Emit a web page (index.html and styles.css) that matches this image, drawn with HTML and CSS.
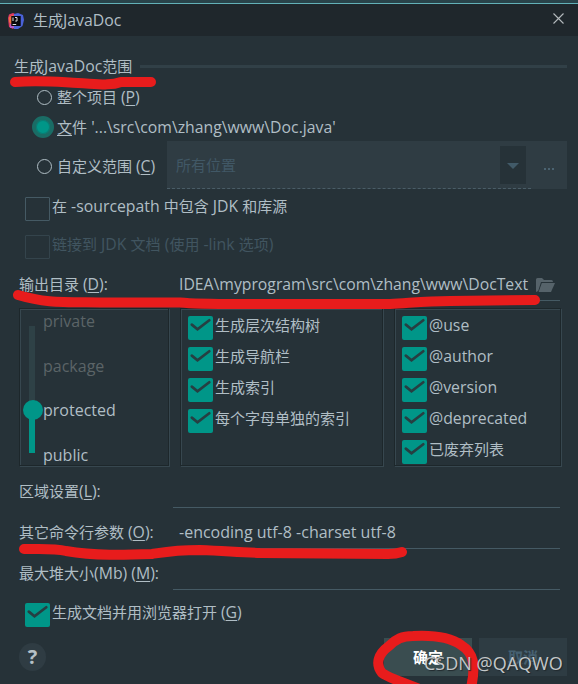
FILE: index.html
```html
<!DOCTYPE html>
<html lang="zh-CN">
<head>
<meta charset="utf-8">
<title>生成JavaDoc</title>
<link rel="stylesheet" href="styles.css">
</head>
<body>
<svg class="defs" width="0" height="0" aria-hidden="true">
  <symbol id="tick" viewBox="0 0 25 24"><path d="M3.800 8.600 9.500 13.200 21.300 4.200" fill="none" stroke="#263f42" stroke-width="2.700" stroke-linecap="round"/></symbol>
</svg>
<main class="dialog">
  <header class="titlebar">
    <svg class="logo" viewBox="0 0 16 16">
      <path d="M1 1.500 5 0l4 2-2 12-2 2-4-2-.5-4L0 5z" fill="#dc3a64"/>
      <path d="M6 1 10 0l5 2 1 5-1.500 6L10 16H6l-1-3z" fill="#4a62d8"/>
      <path d="M1 4 5 2l2 3-4 6-2-2z" fill="#f0703e"/>
      <path d="M2 11l4 1v3l-4 0z" fill="#b55ac5"/>
      <rect x="3.300" y="3" width="9.400" height="10" fill="#08080c"/>
      <path d="M5 4.500v3.500M7 4.500h2v3.500H7.300M4.600 11.500h3.600" fill="none" stroke="#ddd" stroke-width="1"/>
    </svg>
    <h1>生成<em>JavaDoc</em></h1>
    <svg class="close" viewBox="0 0 11 11"><path d="M.5.500l10 10M10.500.500l-10 10" stroke="#b4babd" stroke-width="1.100"/></svg>
  </header>
  <section class="content">
    <div class="row legend"><span>生成<em>JavaDoc</em>范围</span><i></i></div>
    <div class="row radio r1"><i class="dot"></i><span>整个项目 <em>(<u>P</u>)</em></span></div>
    <div class="row radio r2"><i class="dot on"></i><span><u>文</u>件<em> '...\src\com\zhang\www\Doc.java'</em></span></div>
    <div class="row custom">
      <div class="radio"><i class="dot"></i><span>自定义范围 <em>(<u>C</u>)</em></span></div>
      <div class="combo"><span>所有位置</span><b class="arrow"></b></div>
      <div class="more"><i></i><i></i><i></i></div>
    </div>
    <div class="row check c1"><i class="box"></i><span>在<em> -sourcepath </em>中包含<em> JDK </em>和库源</span></div>
    <div class="row check c2 disabled"><i class="box"></i><span>链接到<em> JDK </em>文档<em> (</em>使用<em> -link </em>选项<em>)</em></span></div>
    <div class="row field output"><label>输出目录 <em>(<u>D</u>):</em></label><div class="input"><span><em>IDEA\myprogram\src\com\zhang\www\DocText</em></span>
      <svg class="folder" viewBox="0 0 19 14"><path d="M0 14V1.500Q0 0 1.500 0H6l2 2h7.500Q17 2 17 4H5L2.200 13z" fill="#56636a"/><path d="M5.800 5H19l-4 9H2.600z" fill="#56636a"/></svg></div></div>
    <div class="panels">
      <div class="panel levels">
        <div class="slider"><i></i></div>
        <ul><li class="off">private</li><li class="off">package</li><li>protected</li><li>public</li></ul>
      </div>
      <div class="panel">
        <div class="check"><svg class="box"><use href="#tick"/></svg><span>生成层次结构树</span></div>
        <div class="check"><svg class="box"><use href="#tick"/></svg><span>生成导航栏</span></div>
        <div class="check"><svg class="box"><use href="#tick"/></svg><span>生成索引</span></div>
        <div class="check"><svg class="box"><use href="#tick"/></svg><span>每个字母单独的索引</span></div>
      </div>
      <div class="panel tags">
        <div class="check"><svg class="box"><use href="#tick"/></svg><span><em>@use</em></span></div>
        <div class="check"><svg class="box"><use href="#tick"/></svg><span><em>@author</em></span></div>
        <div class="check"><svg class="box"><use href="#tick"/></svg><span><em>@version</em></span></div>
        <div class="check"><svg class="box"><use href="#tick"/></svg><span><em>@deprecated</em></span></div>
        <div class="check"><svg class="box"><use href="#tick"/></svg><span>已废弃列表</span></div>
      </div>
    </div>
    <div class="row field f1"><label>区域设置<em>(<u>L</u>):</em></label><div class="input"></div></div>
    <div class="row field"><label>其它命令行参数 <em>(<u>O</u>):</em></label><div class="input"><span class="args">-encoding utf-8 -charset utf-8</span></div></div>
    <div class="row field"><label>最大堆大小<em>(Mb) (<u>M</u>):</em></label><div class="input"></div></div>
    <div class="row check open"><svg class="box"><use href="#tick"/></svg><span>生成文档并用浏览器打开 <em>(<u>G</u>)</em></span></div>
    <footer>
      <div class="help">?</div>
      <button class="ok">确定</button>
      <button class="cancel">取消</button>
    </footer>
  </section>
  <svg class="marks" viewBox="0 0 578 684" fill="none" stroke="#e81c1c" stroke-width="10" stroke-linecap="round" stroke-linejoin="round">
    <path d="M15 82C40 80 58 82 78 83S110 86 121 82L151 82"/>
    <path d="M18 295C45 303 60 302 100 302.500L180 302.500C195 304 210 304 240 304L390 304C410 303 425 301 450 301L535 300"/>
    <path d="M24 549C40 549 54 548 66 551C95 556 125 555 152 554C165 552 175 550 200 550C225 551 235 552 260 553L388 554C396 554 399 553 402 552"/>
    <path d="M422 690C402 682 389 678 382 673C375 664 378 654 389 646C396 639 402 636 413 636C432 635 450 637 461 645C474 653 476 665 471 688"/>
  </svg>
  <div class="watermark">CSDN @QAQWO</div>
</main>
</body>
</html>
```
FILE: styles.css
```css
* { box-sizing: border-box; }
body {
  margin: 0;
  background: #263238;
  color: #b0bec5;
  font: 15px/20px "Open Sans", "Noto Sans CJK SC", sans-serif;
}
.defs { position: absolute; }
.dialog { position: relative; width: 578px; height: 684px; overflow: hidden; }
u { text-underline-offset: 2px; text-decoration-thickness: 1px; }
em { font-style: normal; font-size: 15.8px; line-height: 18px; }
span, label { white-space: nowrap; }

.titlebar {
  display: flex;
  align-items: center;
  height: 36px;
  padding: 4px 14px 0 8px;
  background: linear-gradient(#29434a 3px, #62b1b8 3px 4px, #1f272c 4px);
}
.logo { width: 16px; height: 16px; margin-top: 1px; }
h1 { flex: 1; margin: 0 0 0 9px; font-size: 15px; font-weight: 400; }
.close { width: 11px; height: 11px; margin-top: -4px; }

.content { display: flex; flex-direction: column; padding-top: 20px; }
.row { display: flex; flex: none; align-items: center; }
.legend { height: 20px; margin: 0 11px 0 14px; }
.legend span { padding-bottom: 1px; }
.legend i { flex: 1; height: 3px; margin: 1px 0 0 8px; background: #314047; }

.radio { display: flex; align-items: center; }
.radio > span { padding-bottom: 1px; }
.r1 { height: 22px; margin-top: 10px; padding-left: 37px; }
.r2 { height: 22px; margin-top: 8px; padding-left: 32px; }
.dot { width: 15px; height: 15px; margin: 1px 5px 0 0; border: 1px solid #b0bec5; border-radius: 50%; }
.dot.on { width: 22px; height: 22px; margin: 0 3px 0 0; border: 4px solid #1a6c65; background: #009688; box-shadow: inset 0 0 0 1px #087f75; }

.custom { height: 48px; margin: 3px 11px 0 37px; }
.custom .radio { width: 130px; height: 50px; padding-top: 2px; }
.combo {
  display: flex;
  align-items: center;
  justify-content: space-between;
  width: 364px;
  height: 48px;
  padding: 0 5px 0 9px;
  border-bottom: 1px dashed #4a5d67;
  background: #2f3c43;
  color: #415866;
}
.arrow { display: flex; align-items: center; justify-content: center; width: 26px; height: 38px; background: #263238; }
.arrow::after { content: ""; border: 6px solid transparent; border-top-color: #415a68; border-bottom: 0; margin-top: 2px; }
.more { display: flex; flex: 1; gap: 2px; align-items: center; height: 48px; padding: 8px 0 0 13px; background: #2f3c43; }
.more i { width: 2px; height: 2px; background: #4b6371; }

.check { display: flex; align-items: flex-start; height: 31px; }
.check span { margin: -1px 0 0 2px; }
.row.check { align-items: flex-start; }
.box { flex: none; width: 25px; height: 24px; border: 1px solid #455a64; border-radius: 1px; }
svg.box { border: 0; background: #009688; border-radius: 2px; }
.c1 { height: 24px; margin-top: 8px; padding-left: 25px; }
.c2 { height: 24px; margin-top: 14px; padding-left: 25px; }
.disabled { color: #415560; }
.disabled .box { border-color: #34444c; }

.field { height: 41px; padding: 0 18px 0 19px; align-items: stretch; }
.field label { width: 154px; padding-top: 14px; }
.input { display: flex; flex: 1; padding: 14px 0 0 6px; border-bottom: 1px solid #455a64; }
.input span { width: 357px; }
.input .args { font-size: 16px; }
.output { margin-top: 1px; }
.output em { font-size: 15.750px; }
.folder { width: 19px; height: 14px; margin-top: 4px; }

.panels { display: flex; gap: 11px; height: 158px; margin: 7px 16px 0 19px; }
.panel { width: 203px; padding: 7px; border: 1px solid #1d272b; box-shadow: inset 1px 1px #37474f, 1px 1px #37474f; }
.levels { display: flex; width: 150px; padding: 0; }
.tags { width: 167px; }
.slider { display: flow-root; width: 6px; height: 127px; margin: 17px 8px 0 9px; background: linear-gradient(#2e4146 85px, #009688 85px); }
.slider i { display: block; width: 20px; height: 20px; margin: 74px 0 0 -6px; border-radius: 50%; background: #009688; }
ul { margin: 2px 0 0; padding: 0; list-style: none; font-size: 16px; }
li { height: 44.700px; }
.off { color: #5b6467; }

.f1 { margin-top: 1px; }
.open { height: 24px; margin-top: 13px; padding-left: 25px; }
footer { display: flex; margin: 11px 11px 0 19px; }
.help { width: 27px; height: 28px; margin: 5px auto 0 0; border-radius: 50%; background: #2f3c43; color: #b5c0c6; font: 700 20px/28px "Open Sans", sans-serif; text-align: center; }
button { width: 88px; height: 38px; padding: 0; border: 0; font: 700 15px/38px "Open Sans", "Noto Sans CJK SC", sans-serif; }
.ok { margin-right: 7px; background: #3a4d50; color: #fff; }
.cancel { background: #2e3c43; color: #466071; }

.marks { position: absolute; inset: 0; width: 578px; height: 684px; pointer-events: none; }
.watermark { position: absolute; left: 424px; top: 651px; font: 18px/24px "Open Sans", sans-serif; color: #c3c7c9; text-shadow: 1px 1px 1px #20282c; white-space: nowrap; }
```
